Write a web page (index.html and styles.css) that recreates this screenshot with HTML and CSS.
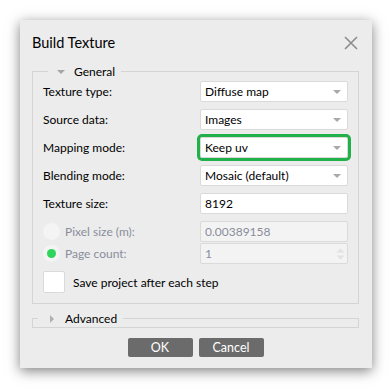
FILE: index.html
```html
<!DOCTYPE html>
<html lang="en">
  <head>
    <meta charset="UTF-8" />
    <meta name="viewport" content="width=device-width, initial-scale=1.0" />
    <title>Build Texture</title>
    <link rel="stylesheet" href="styles.css">
  </head>

  <body>
    <div class="dialog">
      <div class="titlebar">
        <h4>Build Texture</h4>
        <svg class="close" width="14" height="14" viewBox="0 0 14 14">
          <path d="M1 1 L13 13 M13 1 L1 13" stroke="#8c8c8c" stroke-width="1.6" fill="none" />
        </svg>
      </div>

      <fieldset class="group">
        <legend><span class="arrow-down"></span>General</legend>

        <div class="row">
          <label>Texture type:</label>
          <div class="combo">Diffuse map<span class="caret"></span></div>
        </div>
        <div class="row">
          <label>Source data:</label>
          <div class="combo">Images<span class="caret"></span></div>
        </div>
        <div class="row">
          <label>Mapping mode:</label>
          <div class="combo focused">Keep uv<span class="caret"></span></div>
        </div>
        <div class="row">
          <label>Blending mode:</label>
          <div class="combo">Mosaic (default)<span class="caret"></span></div>
        </div>
        <div class="row">
          <label>Texture size:</label>
          <div class="field">8192</div>
        </div>

        <div class="pair">
          <div class="row tight">
            <label class="disabled"><span class="radio"></span>Pixel size (m):</label>
            <div class="field off">0.00389158</div>
          </div>
          <div class="row tight">
            <label class="disabled"><span class="radio on"></span>Page count:</label>
            <div class="field off">1
              <svg class="spin" width="9" height="14" viewBox="0 0 9 14">
                <path d="M0.5 5.5 L4.5 1.5 L8.5 5.5 Z M0.5 8.5 L4.5 12.5 L8.5 8.5 Z" fill="#e2e2e2" />
              </svg>
            </div>
          </div>
        </div>

        <div class="check-row">
          <span class="checkbox"></span>
          <span>Save project after each step</span>
        </div>
      </fieldset>

      <fieldset class="group collapsed">
        <legend><span class="arrow-right"></span>Advanced</legend>
      </fieldset>

      <div class="buttons">
        <button>OK</button>
        <button>Cancel</button>
      </div>
    </div>
  </body>
</html>
```

FILE: styles.css
```css
* {
  box-sizing: border-box;
  font-family: Lato, "Open Sans", sans-serif;
}

body {
  margin: 0;
  background-color: white;
}

.dialog {
  margin: 20px;
  width: 352px;
  height: 348px;
  background-color: #ececec;
  box-shadow: 0 3px 12px rgba(0, 0, 0, 0.5);
  padding: 0 13px 0 12px;
  display: flex;
  flex-direction: column;
}

.titlebar {
  height: 43px;
  display: flex;
  align-items: center;
  justify-content: space-between;
  padding-right: 1px;
}

.titlebar h4 {
  margin: 0;
  font-size: 14.5px;
  font-weight: normal;
  color: #000;
  padding-top: 2px;
}

.close {
  margin-top: 3px;
}

.group {
  margin: 0;
  border: 1px solid #d4d4d4;
  padding: 1px 10px 10px 10px;
  font-size: 12px;
  color: #000;
}

.group legend {
  margin-left: 5px;
  padding: 0 6px 0 9px;
  display: flex;
  align-items: center;
  height: 17px;
}

.arrow-down {
  width: 0;
  height: 0;
  border-left: 4px solid transparent;
  border-right: 4px solid transparent;
  border-top: 4px solid #a6a6a6;
  margin-right: 9px;
}

.arrow-right {
  width: 0;
  height: 0;
  border-top: 4px solid transparent;
  border-bottom: 4px solid transparent;
  border-left: 4px solid #b0b0b0;
  margin: 0 11px 0 3px;
}

.row {
  display: flex;
  justify-content: space-between;
  align-items: center;
  height: 21px;
  margin-bottom: 7px;
}

.pair {
  display: flex;
  flex-direction: column;
  gap: 1px;
  margin-bottom: 7px;
}

.row.tight {
  margin-bottom: 0;
}

label {
  display: flex;
  align-items: center;
}

label.disabled {
  color: #8a8c9c;
}

.combo,
.field {
  position: relative;
  width: 148px;
  height: 21px;
  background-color: white;
  border: 1px solid #dadada;
  border-radius: 2px;
  padding-left: 4px;
  line-height: 19px;
}

.combo.focused {
  outline: 3px solid #22b04b;
}

.caret {
  position: absolute;
  right: 6px;
  top: 8px;
  border-left: 4px solid transparent;
  border-right: 4px solid transparent;
  border-top: 4px solid #a9a9a9;
}

.field.off {
  background-color: #f3f3f3;
  color: #8a8c9c;
}

.spin {
  position: absolute;
  right: 2px;
  top: 3px;
}

.radio {
  flex: none;
  width: 17px;
  height: 17px;
  border-radius: 50%;
  background-color: #f4f4f4;
  margin-right: 5px;
  display: flex;
  align-items: center;
  justify-content: center;
}

.radio.on::after {
  content: "";
  width: 9px;
  height: 9px;
  border-radius: 50%;
  background-color: #2fd45a;
}

.check-row {
  display: flex;
  align-items: center;
  gap: 8px;
}

.checkbox {
  flex: none;
  width: 22px;
  height: 22px;
  background-color: white;
  border: 1px solid #dadada;
  border-radius: 2px;
}

.group.collapsed {
  margin-top: 6px;
  padding: 0;
  height: 16px;
}

.buttons {
  display: flex;
  justify-content: center;
  gap: 6px;
  margin-top: 12px;
}

button {
  width: 65px;
  height: 19px;
  border: none;
  border-radius: 2px;
  background-color: #6b6b6b;
  color: white;
  font-size: 12.5px;
  padding: 0;
}
```
